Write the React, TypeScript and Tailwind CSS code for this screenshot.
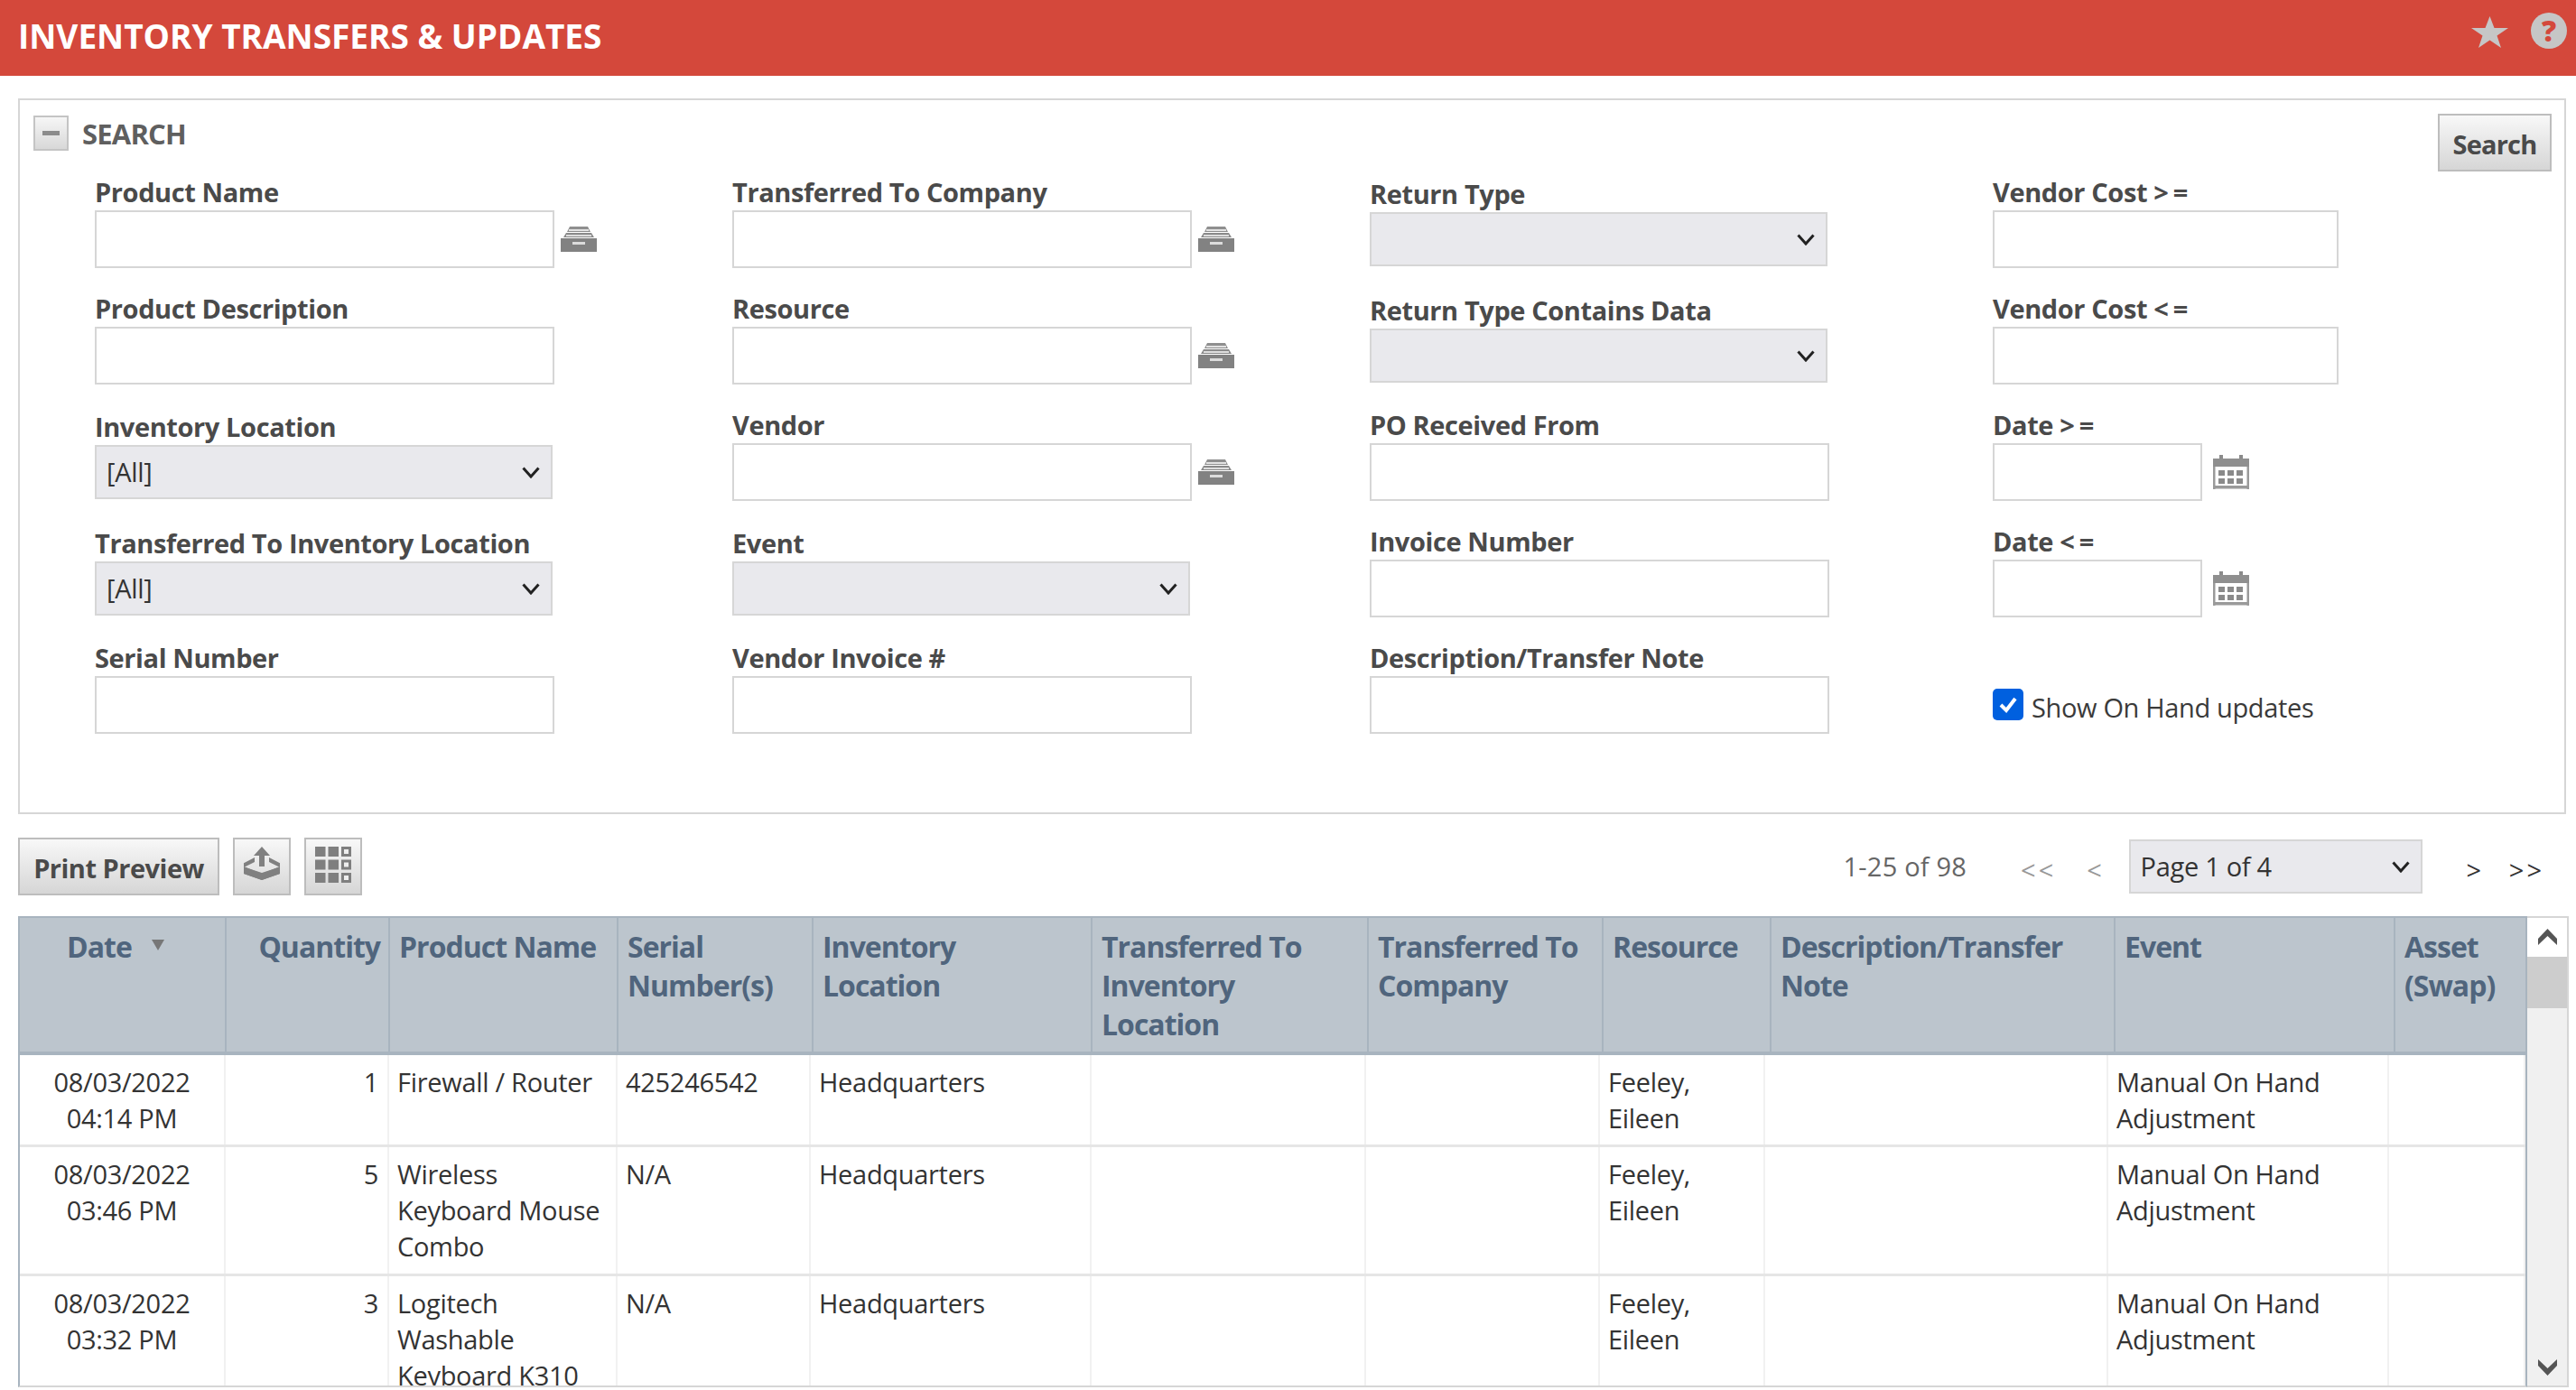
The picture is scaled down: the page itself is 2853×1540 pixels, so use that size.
import React from "react";

const font = "[font-family:'Open_Sans','Noto_Sans',sans-serif]";

function Drawer() {
  return (
    <svg width="40" height="28" viewBox="0 0 40 28" className="shrink-0 -ml-[1px]">
      <path d="M10 0h20l3 6H7z" fill="#8f8f8f" />
      <rect x="9" y="3" width="22" height="2" fill="#e2e2e2" />
      <path d="M6 7h28l3 5H3z" fill="#8a8a8a" />
      <rect x="6" y="9" width="28" height="2" fill="#dddddd" />
      <rect x="0" y="13" width="40" height="15" fill="#828282" />
      <rect x="13" y="17" width="14" height="3" fill="#dcdcdc" />
    </svg>
  );
}

function Calendar() {
  return (
    <svg width="40" height="38" viewBox="0 0 40 38" className="shrink-0 ml-[4px]">
      <rect x="7" y="0" width="4" height="8" fill="#8a8a8a" />
      <rect x="29" y="0" width="4" height="8" fill="#8a8a8a" />
      <rect x="0" y="4" width="40" height="9" fill="#8f8f8f" />
      <rect x="0" y="13" width="2.5" height="25" fill="#9a9a9a" />
      <rect x="37.500" y="13" width="2.5" height="25" fill="#9a9a9a" />
      <rect x="0" y="34" width="40" height="3.5" fill="#9a9a9a" />
      {[6, 16, 26].flatMap((x) =>
        [17, 26].map((y) => <rect key={`${x}-${y}`} x={x} y={y} width="7" height="6" fill="#8a8a8a" />)
      )}
    </svg>
  );
}

function ExportIcon() {
  return (
    <svg width="40" height="37" viewBox="0 0 40 37">
      <path d="M20 0l9 10h-6v12h-6V10h-6z" fill="#808080" />
      <path d="M12 12v5l-12 6v7l20 7 20-7v-7l-12-6v-5l17 9-25 8-25-8z" fill="#808080" />
      <path d="M0 22l20 8 20-8v8l-20 7-20-7z" fill="#808080" />
    </svg>
  );
}

function GridIcon() {
  return (
    <svg width="40" height="40" viewBox="0 0 40 40">
      {[0, 14.5, 29].flatMap((y) =>
        [0, 14.5].map((x) => <rect key={`${x}-${y}`} x={x} y={y} width="11.500" height="11" fill="#7f7f7f" />)
      )}
      {[0, 14.5, 29].map((y) => (
        <rect key={y} x="30.500" y={y + 1.5} width="8" height="8" fill="#eeeeee" stroke="#7f7f7f" strokeWidth="3" />
      ))}
    </svg>
  );
}

function Chevron({ up }: { up?: boolean }) {
  return (
    <svg width="21" height="18" viewBox="0 0 21 18">
      <polygon points={up ? "0 11 10.500 0 21 11 21 18 10.500 8 0 18" : "0 0 10.500 10 21 0 21 7 10.500 18 0 7"} fill="#555" />
    </svg>
  );
}

function Label({ children, drop }: { children: React.ReactNode; drop?: boolean }) {
  return (
    <div className={`flex items-end text-[29px] leading-[38px] font-bold text-[#4a4a4a] tracking-[-0.4px] whitespace-pre ${drop ? "h-[66px] mb-[-1px] pb-0" : "h-[65px] pb-[1px]"}`}>
      <span>{children}</span>
    </div>
  );
}

function TextField({ label, w = "w-[509px]", icon }: { label: React.ReactNode; w?: string; icon?: React.ReactNode }) {
  return (
    <div>
      <Label>{label}</Label>
      <div className="flex items-center gap-[8px]">
        <div className={`${w} h-[64px] border-2 border-[#d6d6d6] bg-white`} />
        {icon}
      </div>
    </div>
  );
}

function SelectField({ label, value }: { label: string; value?: string }) {
  return (
    <div className="pb-[2px]">
      <Label drop>{label}</Label>
      <SelectBox value={value} w="w-[507px]" />
    </div>
  );
}

function SelectBox({ value, w }: { value?: string; w: string }) {
  return (
    <div className={`${w} h-[60px] mt-[2px] border-2 border-[#d6d6d6] bg-[#e9e9ed] flex items-center justify-between pl-[11px] pr-[12px] text-[29px] tracking-[-0.3px] text-[#333]`}>
      <span>{value}</span>
      <svg width="20" height="13" viewBox="0 0 20 13" fill="none">
        <path d="M1.500 1.500L10 11l8.500-9.500" stroke="#222" strokeWidth="3" />
      </svg>
    </div>
  );
}

const headCols = "grid grid-cols-[229px_181px_253px_216px_309px_306px_260px_186px_381px_310px_148px]";
const bodyCols = "grid grid-cols-[228px_181px_253px_214px_311px_304px_259px_183px_380px_311px_151px]";

const heads: { t: string; c?: string; sort?: boolean }[] = [
  { t: "Date", sort: true },
  { t: "Quantity", c: "text-right" },
  { t: "Product Name" },
  { t: "Serial\nNumber(s)" },
  { t: "Inventory\nLocation" },
  { t: "Transferred To\nInventory\nLocation" },
  { t: "Transferred To\nCompany" },
  { t: "Resource" },
  { t: "Description/Transfer\nNote" },
  { t: "Event" },
  { t: "Asset\n(Swap)" },
];

const rows = [
  { d: "08/03/2022", tm: "04:14 PM", q: "1", p: "Firewall / Router", s: "425246542", h: "h-[102px]" },
  { d: "08/03/2022", tm: "03:46 PM", q: "5", p: "Wireless\nKeyboard Mouse\nCombo", s: "N/A", h: "h-[143px]" },
  { d: "08/03/2022", tm: "03:32 PM", q: "3", p: "Logitech\nWashable\nKeyboard K310", s: "N/A", h: "h-[143px]" },
];

function Cell({ children, c = "" }: { children?: React.ReactNode; c?: string }) {
  return <div className={`border-r-2 border-[#f1f1f1] pt-[10px] pl-[9px] pr-[9px] whitespace-pre-line ${c}`}>{children}</div>;
}

const btn = "border-2 border-[#bdbdbd] bg-gradient-to-b from-[#f8f8f8] to-[#d6d6d6]";

export default function App() {
  return (
    <div className={`w-[2853px] h-[1540px] overflow-hidden bg-white ${font}`}>
      <header className="h-[84px] bg-[#d4483b] flex items-start justify-between pl-[20px] pr-[10px]">
        <h1 className="text-[37px] leading-[80px] font-bold text-white tracking-[0px]">INVENTORY TRANSFERS &amp; UPDATES</h1>
        <div className="flex items-start gap-[25px] pt-[14px]">
          <svg width="41" height="35" viewBox="0 0 41 35" className="mt-[4px]">
            <polygon points="20.500 0 25.500 13 41 13 28.500 21.500 33 35 20.500 26.500 8 35 12.500 21.500 0 13 15.500 13" fill="#c6c6c6" />
          </svg>
          <div className="w-[40px] h-[40px] rounded-full bg-[#c6c6c6] flex items-center justify-center text-[#d4483b] text-[32px] font-extrabold leading-none">?</div>
        </div>
      </header>

      <section className="ml-[20px] mr-[11px] mt-[25px] h-[793px] border-2 border-[#d6d6d6] pt-[15px] pr-[14px] pl-[15px]">
        <div className="flex justify-between items-start h-[42px]">
          <div className="flex items-center">
            <div className="w-[39px] h-[39px] border-2 border-[#c4c4c4] bg-gradient-to-b from-[#f6f6f6] to-[#d8d8d8] flex items-center justify-center">
              <div className="w-[19px] h-[5px] bg-[#8c8c8c]" />
            </div>
            <span className="ml-[15px] mt-[3px] text-[31px] leading-[39px] font-bold text-[#5f5f5f] tracking-[-0.8px]">SEARCH</span>
          </div>
          <button className={`relative w-[126px] h-[64px] ${btn} pt-[3px] text-[29px] font-bold text-[#4a4a4a] tracking-[-0.8px]`}>Search</button>
        </div>
        <div className="ml-[68px] grid grid-cols-[706px_706px_690px_1fr]">
          <div>
            <TextField label="Product Name" icon={<Drawer />} />
            <TextField label="Product Description" />
            <SelectField label="Inventory Location" value="[All]" />
            <SelectField label="Transferred To Inventory Location" value="[All]" />
            <TextField label="Serial Number" />
          </div>
          <div>
            <TextField label="Transferred To Company" icon={<Drawer />} />
            <TextField label="Resource" icon={<Drawer />} />
            <TextField label="Vendor" icon={<Drawer />} />
            <SelectField label="Event" />
            <TextField label="Vendor Invoice #" />
          </div>
          <div>
            <SelectField label="Return Type" />
            <SelectField label="Return Type Contains Data" />
            <TextField label="PO Received From" />
            <TextField label="Invoice Number" />
            <TextField label="Description/Transfer Note" />
          </div>
          <div>
            <TextField label={<>Vendor Cost <span className="tracking-[5px]">&gt;=</span></>} w="w-[383px]" />
            <TextField label={<>Vendor Cost <span className="tracking-[5px]">&lt;=</span></>} w="w-[383px]" />
            <TextField label={<>Date <span className="tracking-[5px]">&gt;=</span></>} w="w-[232px]" icon={<Calendar />} />
            <TextField label={<>Date <span className="tracking-[5px]">&lt;=</span></>} w="w-[232px]" icon={<Calendar />} />
            <div className="flex items-center mt-[77px] h-[38px]">
              <div className="w-[34px] h-[35px] rounded-[5px] bg-[#0060df] flex items-center justify-center">
                <svg width="24" height="24" viewBox="0 0 24 24" fill="none">
                  <path d="M4 13l6 6L20 6" stroke="#fff" strokeWidth="4" />
                </svg>
              </div>
              <span className="ml-[9px] text-[29px] text-[#3a3a3a] tracking-[-0.35px] leading-[38px] mt-[8px]">Show On Hand updates</span>
            </div>
          </div>
        </div>
      </section>

      <div className="ml-[20px] mr-[35px] mt-[26px] h-[64px] flex items-start">
        <button className={`w-[223px] h-[64px] ${btn} pt-[4px] text-[29px] font-bold text-[#4a4a4a] tracking-[-0.5px]`}>Print Preview</button>
        <button className={`ml-[15px] w-[64px] h-[64px] ${btn} flex items-start justify-center pt-[8px]`}><ExportIcon /></button>
        <button className={`ml-[15px] w-[64px] h-[64px] ${btn} flex items-start justify-center pt-[8px]`}><GridIcon /></button>
        <div className="ml-auto flex items-center h-[64px] text-[29px] tracking-[-0.3px]">
          <span className="text-[#666] mr-[60px] tracking-[0.2px]">1-25 of 98</span>
          <span className="text-[#999] mr-[34px] mt-[8px] tracking-[3px]">&lt;&lt;</span>
          <span className="text-[#999] mr-[30px] mt-[8px]">&lt;</span>
          <div className="mt-[-2px]"><SelectBox value="Page 1 of 4" w="w-[325px]" /></div>
          <span className="text-[#333] ml-[49px] mt-[8px]">&gt;</span>
          <span className="text-[#333] ml-[31px] mt-[8px] tracking-[3px]">&gt;&gt;</span>
        </div>
      </div>

      <div className="ml-[20px] mt-[23px] h-[522px] flex items-start">
        <div className="w-[2779px] h-[522px] flex flex-col">
          <div className={`${headCols} h-[154px] bg-[#bcc5cd] border-t-[2px] border-l-[2px] border-r-[2px] border-b-[4px] border-[#a8b4bf] text-[32px] leading-[43px] font-bold text-[#50657d] tracking-[-1px]`}>
            {heads.map((h) => (
              <div key={h.t} className={`border-r-2 border-[#a8b4bf] last:border-r-0 pt-[10px] pl-[10px] pr-[9px] whitespace-pre-line ${h.c ?? ""}`}>
                {h.sort ? (
                  <div className="flex justify-center items-start gap-[22px] pr-[16px]">
                    <span>Date</span>
                    <svg width="14" height="12" viewBox="0 0 14 12" className="mt-[14px]"><path d="M0 0h14l-7 12z" fill="#777" /></svg>
                  </div>
                ) : h.t}
              </div>
            ))}
          </div>
          <div className="flex-1 overflow-hidden border-l-2 border-r-2 border-b-2 border-l-[#a8b4bf] border-r-[#a8b4bf] border-b-[#d6d6d6] text-[29px] leading-[40px] tracking-[-0.3px] text-[#333]">
            {rows.map((r) => (
              <div key={r.tm} className={`${bodyCols} ${r.h} shrink-0 border-b-[3px] border-[#e6e6e6]`}>
                <Cell c="text-center">{r.d}{"\n"}{r.tm}</Cell>
                <Cell c="text-right pr-[10px]">{r.q}</Cell>
                <Cell>{r.p}</Cell>
                <Cell>{r.s}</Cell>
                <Cell>Headquarters</Cell>
                <Cell />
                <Cell />
                <Cell>{"Feeley,\nEileen"}</Cell>
                <Cell />
                <Cell>{"Manual On Hand\nAdjustment"}</Cell>
                <Cell c="border-r-0" />
              </div>
            ))}
          </div>
        </div>
        <div className="w-[46px] h-[522px] bg-[#f0f0f0] border-t-2 border-r-2 border-b-2 border-[#d6d6d6] flex flex-col">
          <div className="h-[43px] bg-white flex items-start justify-center pt-[12px]"><Chevron up /></div>
          <div className="h-[57px] bg-[#cdcdcd]" />
          <div className="mt-auto h-[29px] flex items-start justify-center"><Chevron /></div>
        </div>
      </div>
    </div>
  );
}
